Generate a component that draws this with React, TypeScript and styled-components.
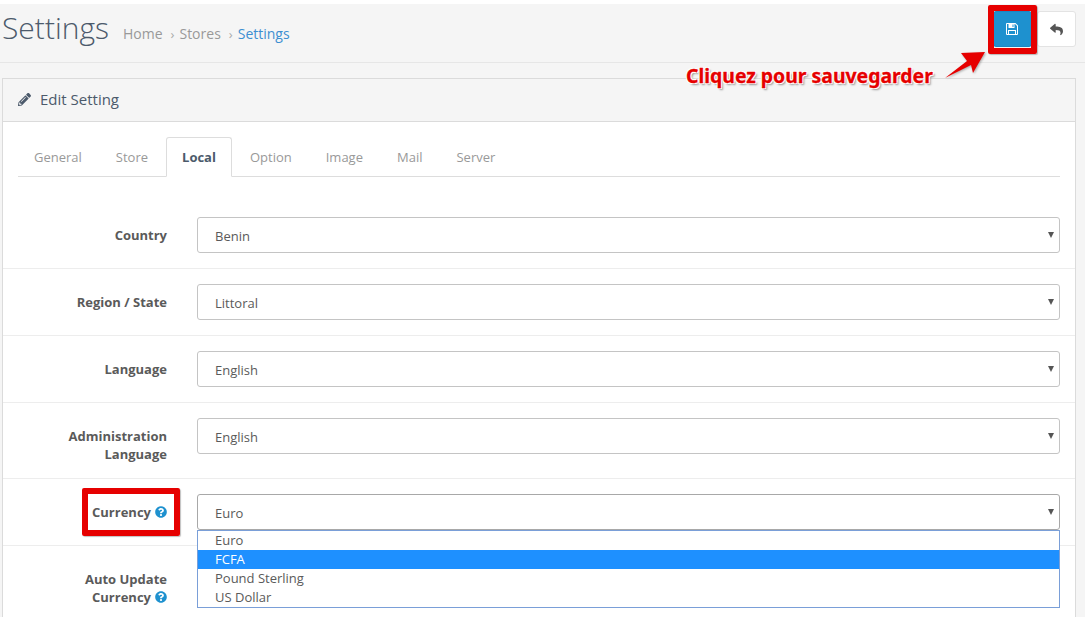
import styled, { createGlobalStyle } from "styled-components";
import { FaPencilAlt, FaQuestionCircle, FaReply } from "react-icons/fa";

const GlobalStyle = createGlobalStyle`
  html, body {
    margin: 0;
    height: 617px;
    overflow: hidden;
    background: #fff;
  }
  body {
    font-family: "Open Sans", sans-serif;
    font-size: 13px;
    color: #666;
  }
`;

const Page = styled.div`
  position: relative;
  width: 1085px;
  height: 617px;
  overflow: hidden;
  padding-top: 4px;
  box-sizing: border-box;
  background: #f5f5f5;
  box-shadow: inset 0 4px 0 #fff;
`;

const PageHeader = styled.header`
  display: flex;
  align-items: flex-start;
  height: 59px;
  padding: 6px 9px 0 2px;
  box-sizing: border-box;
  border-bottom: 1px solid #e6e6e6;
`;

const Title = styled.h1`
  margin: 0;
  font-size: 30px;
  font-weight: 300;
  line-height: 36px;
  color: #4c5a6b;
`;

const Breadcrumb = styled.ol`
  display: flex;
  align-items: center;
  margin: 9px 0 0 14px;
  padding: 0;
  list-style: none;
  font-size: 14px;
  line-height: 30px;
  color: #999;
  li + li::before {
    content: "›";
    margin: 0 5px 0 8px;
    color: #aaa;
    font-size: 13px;
  }
`;

const Crumb = styled.li<{ $active?: boolean }>`
  color: ${({ $active }) => ($active ? "#3d8fd1" : "#999")};
`;

const Actions = styled.div`
  display: flex;
  gap: 5px;
  margin: 1px 0 0 auto;
`;

const IconButton = styled.button<{ $primary?: boolean }>`
  display: flex;
  align-items: center;
  justify-content: center;
  width: 39px;
  height: 36px;
  padding: 0 ${({ $primary }) => ($primary ? "1px" : "0")} 0 0;
  border: 1px solid ${({ $primary }) => ($primary ? "#1c86c3" : "#e3e3e3")};
  border-radius: 3px;
  background: ${({ $primary }) => ($primary ? "#1e91cf" : "#fff")};
  color: ${({ $primary }) => ($primary ? "#fff" : "#555")};
  font-size: 13px;
`;

const Panel = styled.section`
  margin: 15px 9px 0 2px;
  border: 1px solid #dbdbdb;
  border-bottom: 0;
  background: #fff;
  height: 600px;
`;

const PanelHeading = styled.div`
  display: flex;
  align-items: center;
  gap: 9px;
  height: 43px;
  padding: 0 15px 2px;
  box-sizing: border-box;
  border-bottom: 1px solid #dbdbdb;
  background: #f5f5f5;
  font-size: 15px;
  color: #4c5a6b;
  svg {
    font-size: 13px;
    color: #4c5a6b;
  }
`;

const Tabs = styled.nav`
  display: flex;
  align-items: flex-end;
  gap: 2px;
  height: 40px;
  margin: 14px 15px 25px;
  border-bottom: 1px solid #ddd;
`;

const Tab = styled.a<{ $active?: boolean }>`
  display: flex;
  align-items: center;
  height: 40px;
  margin-bottom: -1px;
  padding: 0 15px;
  box-sizing: border-box;
  border: 1px solid ${({ $active }) => ($active ? "#ddd" : "transparent")};
  border-bottom-color: ${({ $active }) => ($active ? "#fff" : "transparent")};
  border-radius: 3px 3px 0 0;
  background: ${({ $active }) => ($active ? "#fff" : "transparent")};
  font-size: 13px;
  font-weight: ${({ $active }) => ($active ? 700 : 400)};
  color: ${({ $active }) => ($active ? "#4c5a6b" : "#999")};
`;

const FormRow = styled.div`
  display: grid;
  grid-template-columns: 164px 1fr;
  column-gap: 30px;
  align-items: start;
  padding: 15px 15px 15px 0;
  border-bottom: 1px solid #ededed;
  &:last-child {
    min-height: 90px;
    border-bottom: 0;
  }
`;

const Label = styled.label`
  position: relative;
  padding: 9px 0 0 20px;
  text-align: right;
  font-size: 13px;
  font-weight: 700;
  line-height: 18px;
  color: #5a5a5a;
  svg {
    margin-left: 4px;
    font-size: 12px;
    color: #1e91cf;
    vertical-align: -1px;
  }
`;

const LabelFrame = styled.span`
  position: absolute;
  top: -6px;
  right: -13px;
  width: 98px;
  height: 48px;
  box-sizing: border-box;
  border: 6px solid #e60000;
  border-radius: 2px;
  box-shadow: 1px 1px 1px rgba(0, 0, 0, 0.25);
`;

const SelectBox = styled.div<{ $open?: boolean }>`
  position: relative;
  display: flex;
  align-items: center;
  height: 36px;
  padding: 2px 0 0 17px;
  box-sizing: border-box;
  border: 1px solid ${({ $open }) => ($open ? "#a8a8a8" : "#c4c4c4")};
  border-radius: 3px;
  font-size: 13px;
  color: #5a5a5a;
  background: #fff;
  &::after {
    content: "";
    position: absolute;
    right: 5px;
    top: 14px;
    border-style: solid;
    border-width: 6px 3.5px 0;
    border-color: #555 transparent transparent;
  }
`;

const Dropdown = styled.ul`
  position: absolute;
  z-index: 2;
  left: -1px;
  right: -1px;
  top: 35px;
  margin: 0;
  padding: 0;
  list-style: none;
  border: 1px solid #7a9fd8;
  background: #fff;
`;

const Option = styled.li<{ $selected?: boolean }>`
  height: 19px;
  padding-left: 17px;
  font-size: 13px;
  line-height: 19px;
  background: ${({ $selected }) => ($selected ? "#1e90ff" : "transparent")};
  color: ${({ $selected }) => ($selected ? "#fff" : "#5a5a5a")};
`;

const SaveFrame = styled.div`
  position: absolute;
  top: 5px;
  left: 988px;
  width: 49px;
  height: 49px;
  box-sizing: border-box;
  border: 6px solid #e60000;
  border-radius: 2px;
  box-shadow: 1px 1px 1px rgba(0, 0, 0, 0.25);
`;

const Callout = styled.div`
  position: absolute;
  top: 63px;
  left: 686px;
  font-family: "Noto Sans", "Open Sans", sans-serif;
  font-size: 19.4px;
  font-weight: 700;
  line-height: 26px;
  white-space: nowrap;
  color: #e60000;
  -webkit-text-stroke: 0.3px #e60000;
  text-shadow: 1px 1px 0 #fff, -1px -1px 0 #fff, 1px -1px 0 #fff, -1px 1px 0 #fff, 2px 2px 2px #999;
`;

const CalloutArrow = styled.svg`
  position: absolute;
  top: 50px;
  left: 942px;
  filter: drop-shadow(1px 1px 1px rgba(0, 0, 0, 0.3));
`;

const rows = [
  { label: "Country", value: "Benin" },
  { label: "Region / State", value: "Littoral" },
  { label: "Language", value: "English" },
  { label: "Administration Language", value: "English" },
];

const tabs = ["General", "Store", "Local", "Option", "Image", "Mail", "Server"];

const App = () => {
  return (
    <Page>
      <GlobalStyle />
      <PageHeader>
        <Title>Settings</Title>
        <Breadcrumb>
          <Crumb>Home</Crumb>
          <Crumb>Stores</Crumb>
          <Crumb $active>Settings</Crumb>
        </Breadcrumb>
        <Actions>
          <IconButton $primary>
            <svg width="12" height="12" viewBox="0 0 12 12" fill="none">
              <path
                d="M0 1a1 1 0 0 1 1-1h8.5L12 2.5V11a1 1 0 0 1-1 1H1a1 1 0 0 1-1-1Z M1 1v10h1V7h8v4h1V3L9 1H8.5v4h-6V1Z M3 8v3h6V8Z M6.5 1.5V4H7.5V1.5Z"
                fill="#fff"
                fillRule="evenodd"
              />
            </svg>
          </IconButton>
          <IconButton>
            <FaReply />
          </IconButton>
        </Actions>
      </PageHeader>
      <Panel>
        <PanelHeading>
          <FaPencilAlt />
          Edit Setting
        </PanelHeading>
        <Tabs>
          {tabs.map((tab) => (
            <Tab key={tab} $active={tab === "Local"}>
              {tab}
            </Tab>
          ))}
        </Tabs>
        {rows.map((row) => (
          <FormRow key={row.label}>
            <Label>{row.label}</Label>
            <SelectBox>{row.value}</SelectBox>
          </FormRow>
        ))}
        <FormRow>
          <Label>
            Currency
            <FaQuestionCircle />
            <LabelFrame />
          </Label>
          <SelectBox $open>
            Euro
            <Dropdown>
              <Option>Euro</Option>
              <Option $selected>FCFA</Option>
              <Option>Pound Sterling</Option>
              <Option>US Dollar</Option>
            </Dropdown>
          </SelectBox>
        </FormRow>
        <FormRow>
          <Label>
            Auto Update Currency
            <FaQuestionCircle />
          </Label>
        </FormRow>
      </Panel>
      <SaveFrame />
      <Callout>Cliquez pour sauvegarder</Callout>
      <CalloutArrow width="46" height="32" viewBox="0 0 46 32">
        <path d="M3 28 L25 11 L19 3 L43 2 L31 23 L29 15 Z" fill="#e60000" />
      </CalloutArrow>
    </Page>
  );
};

export default App;
